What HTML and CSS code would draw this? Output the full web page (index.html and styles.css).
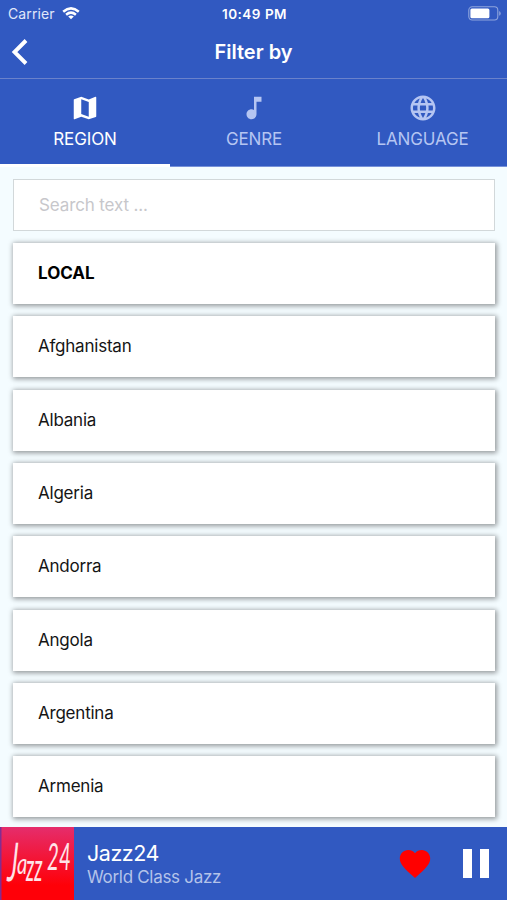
FILE: index.html
```html
<!DOCTYPE html>
<html lang="en">
<head>
<meta charset="utf-8">
<title>Filter by</title>
<link rel="stylesheet" href="styles.css">
</head>
<body>
<div class="app">
  <header class="header">
    <div class="status">
      <div class="carrier"><span>Carrier</span>
        <svg class="wifi" width="18" height="13" viewBox="0 0 18 13" fill="none" stroke="#fff" stroke-width="2.5"><path d="M1.2 4.7Q9-2 16.8 4.7M4.1 7.7Q9 3.6 13.9 7.7"/><path d="M9 12.3 6.2 9.6Q9 7.5 11.8 9.6Z" fill="#fff" stroke="none"/></svg>
      </div>
      <time class="clock">10:49 PM</time>
      <svg class="battery" width="33" height="15" viewBox="0 0 33 15"><rect x=".8" y=".8" width="29" height="13.2" rx="3.4" fill="none" stroke="#8fa5dd" stroke-width="1.1"/><rect x="2.4" y="2.6" width="19" height="9.6" rx="1.5" fill="#fff"/><path d="M31.2 5v4.8Q32.7 9 32.7 7.4T31.2 5Z" fill="#8fa5dd"/></svg>
    </div>
    <div class="titlebar">
      <svg class="back" width="18" height="28" viewBox="0 0 18 28" fill="none" stroke="#fff" stroke-width="3.9"><path d="M15 2.5 3.5 14 15 25.5"/></svg>
      <h1 class="title">Filter by</h1>
    </div>
  </header>
  <nav class="tabs">
    <div class="tab active">
      <svg class="icon" viewBox="0 0 24 24"><path d="M20.5 3l-.16.03L15 5.1 9 3 3.36 4.9c-.21.07-.36.25-.36.48V20.5c0 .28.22.5.5.5l.16-.03L9 18.9l6 2.1 5.64-1.9c.21-.07.36-.25.36-.48V3.5c0-.28-.22-.5-.5-.5zM15 19l-6-2.11V5l6 2.11V19z"/></svg>
      <span>REGION</span>
    </div>
    <div class="tab">
      <svg class="icon" viewBox="0 0 24 24"><path d="M12 3v10.55c-.59-.34-1.27-.55-2-.55-2.21 0-4 1.79-4 4s1.79 4 4 4 4-1.79 4-4V7h4V3h-6z"/></svg>
      <span>GENRE</span>
    </div>
    <div class="tab">
      <svg class="icon" viewBox="0 0 24 24"><path d="M11.99 2C6.47 2 2 6.48 2 12s4.47 10 9.99 10C17.52 22 22 17.52 22 12S17.52 2 11.99 2zm6.93 6h-2.95c-.32-1.25-.78-2.45-1.38-3.56 1.84.63 3.37 1.91 4.33 3.56zM12 4.04c.83 1.2 1.48 2.53 1.91 3.96h-3.82c.43-1.43 1.08-2.76 1.91-3.96zM4.26 14C4.1 13.36 4 12.69 4 12s.1-1.36.26-2h3.38c-.08.66-.14 1.32-.14 2s.06 1.34.14 2H4.26zm.82 2h2.95c.32 1.25.78 2.45 1.38 3.56-1.84-.63-3.37-1.9-4.33-3.56zm2.95-8H5.08c.96-1.66 2.49-2.93 4.33-3.56C8.81 5.55 8.35 6.75 8.03 8zM12 19.96c-.83-1.2-1.48-2.53-1.91-3.96h3.82c-.43 1.43-1.08 2.76-1.91 3.96zM14.34 14H9.66c-.09-.66-.16-1.32-.16-2s.07-1.35.16-2h4.68c.09.65.16 1.32.16 2s-.07 1.34-.16 2zm.25 5.56c.6-1.11 1.06-2.31 1.38-3.56h2.95c-.96 1.65-2.49 2.93-4.33 3.56zM16.36 14c.08-.66.14-1.32.14-2s-.06-1.34-.14-2h3.38c.16.64.26 1.31.26 2s-.1 1.36-.26 2h-3.38z"/></svg>
      <span>LANGUAGE</span>
    </div>
  </nav>
  <main class="content">
    <input class="search" type="text" placeholder="Search text ..." aria-label="Search text">
    <div class="list">
      <div class="card local">LOCAL</div>
      <div class="card">Afghanistan</div>
      <div class="card">Albania</div>
      <div class="card">Algeria</div>
      <div class="card">Andorra</div>
      <div class="card">Angola</div>
      <div class="card">Argentina</div>
      <div class="card">Armenia</div>
    </div>
  </main>
  <footer class="player">
    <svg class="cover" width="74" height="73" viewBox="0 0 74 73">
      <defs><linearGradient id="g" x2="0" y2="1"><stop stop-color="#e52d6c"/><stop offset=".8" stop-color="#ff0008"/></linearGradient></defs>
      <rect width="74" height="73" fill="url(#g)"/>
      <rect width="1.5" height="73" fill="#832c91"/>
      <g class="script"><text transform="translate(7 54) rotate(3) scale(.46 1)" font-size="54">J</text><text transform="translate(17 47) scale(.72 1)" font-size="28">a</text><text transform="translate(26 54) scale(.72 1.45)" font-size="27">zz</text><text transform="translate(47 43) scale(.57 1)" font-size="36">24</text></g>
    </svg>
    <div class="track"><div class="station">Jazz24</div><div class="tagline">World Class Jazz</div></div>
    <svg class="heart" width="32" height="30" viewBox="0 0 32 30"><path d="M16 29 13.8 27C6 20 .8 15.3.8 9.5.8 4.8 4.5 1 9.2 1c2.6 0 5.1 1.2 6.8 3.2C17.7 2.2 20.2 1 22.8 1c4.7 0 8.4 3.8 8.4 8.5 0 5.8-5.2 10.5-13 17.5Z" fill="#f00"/></svg>
    <div class="pause"><i></i><i></i></div>
  </footer>
</div>
</body>
</html>
```
FILE: styles.css
```css
* { box-sizing: border-box; }
body { margin: 0; font-family: Inter, "Liberation Sans", sans-serif; }
.app { width: 507px; height: 900px; display: flex; flex-direction: column; overflow: hidden; background: #f4fcff; }
.header { height: 79px; flex: none; background: #3159c1; color: #fff; border-bottom: 1px solid #6a82cb; }
.status { height: 27px; padding: 0 6px 0 8px; display: grid; grid-template-columns: 1fr auto 1fr; align-items: center; }
.carrier { display: flex; align-items: center; gap: 7px; font-size: 14px; letter-spacing: .12px; color: #e0e7fa; }
.wifi { margin-top: -1px; }
.clock { font-size: 13.5px; font-weight: 600; letter-spacing: .5px; }
.battery { justify-self: end; }
.titlebar { height: 51px; display: grid; grid-template-columns: 40px 1fr 40px; align-items: center; }
.back { margin-left: 11px; margin-top: -1px; }
.title { margin: -2px 0 0; font-size: 20px; line-height: 30px; font-weight: 600; text-align: center; }
.tabs { height: 88px; flex: none; display: grid; grid-template-columns: 170px 1fr 169px; background: #3159c1; }
.tab { display: flex; flex-direction: column; align-items: center; padding-top: 14px; color: #b5c5f2; font-size: 17px; letter-spacing: -.15px; line-height: 26px; border-bottom: 1px solid #7691d9; }
.tab.active { color: #fff; border-bottom: 3px solid #fff; }
.icon { width: 30px; height: 30px; fill: currentColor; margin-bottom: 3px; }
.content { flex: 1; padding: 12px 12px 0 13px; min-height: 0; }
.search { display: block; width: 482px; height: 52px; border: 1px solid #d2d8da; border-radius: 0; background: #fff; padding: 0 25px; font: 17px Inter, sans-serif; letter-spacing: -.13px; outline: none; }
.search::placeholder { color: #c7c7cb; opacity: 1; }
.list { display: flex; flex-direction: column; gap: 12.33px; padding-top: 12px; }
.card { height: 61px; flex: none; padding-left: 25px; background: #fff; color: #151515; font-size: 17px; letter-spacing: -.22px; line-height: 61px; box-shadow: 1px 1px 5px 1px rgba(0, 0, 0, .4); }
.local { font-weight: 700; color: #000; letter-spacing: 0; }
.player { height: 73px; flex: none; display: flex; align-items: center; background: #3159c1; color: #fff; }
.script { font-family: Lato, sans-serif; font-style: italic; font-weight: 400; fill: #ffe3e8; }
.track { width: 311px; padding-left: 13px; }
.station { font-size: 21.5px; letter-spacing: -.45px; line-height: 26px; }
.tagline { font-size: 17px; letter-spacing: -.3px; line-height: 22px; color: #b4c3e9; }
.heart { margin-left: 14px; }
.pause { display: flex; gap: 8px; margin-left: 32px; }
.pause i { width: 9px; height: 29px; background: #fff; }
```
